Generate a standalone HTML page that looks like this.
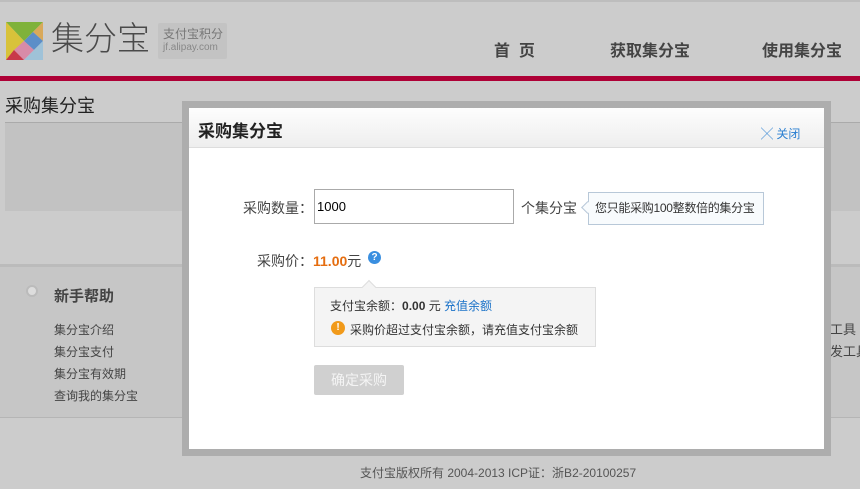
<!DOCTYPE html>
<html><head><meta charset="utf-8"><style>
*{margin:0;padding:0;box-sizing:border-box}
body{width:860px;height:489px;overflow:hidden;background:#cccccc;font-family:"Liberation Sans","Noto Sans CJK SC","WenQuanYi Zen Hei",sans-serif;font-size:12px;color:#333;position:relative}
.a{position:absolute;white-space:nowrap}
</style></head><body>
<div class="a" style="left:0;top:0;width:860px;height:2px;background:#bdbdbd"></div>
<svg class="a" style="left:6px;top:22px" width="37" height="38" viewBox="0 0 37 38">
<polygon points="0,0 37,0 18,19" fill="#7fb23a"/>
<polygon points="0,0 18,19 0,38" fill="#d8c23a"/>
<polygon points="37,0 37,19 27,10" fill="#d9a95a"/>
<polygon points="27,10 37,19 28,28 18,19" fill="#5c8ec8"/>
<polygon points="18,19 28,28 18,38 8,28" fill="#d88ba8"/>
<polygon points="0,38 8,28 18,38" fill="#c8384a"/>
<polygon points="37,19 37,38 18,38" fill="#9fc2d8"/>
</svg>
<div class="a" style="left:51px;top:19px;font-size:33px;line-height:40px;color:#4a4a4a;font-weight:300">集分宝</div>
<div class="a" style="left:158px;top:23px;width:69px;height:36px;background:#c3c3c3;border-radius:2px"></div>
<div class="a" style="left:163px;top:27px;font-size:12px;line-height:15px;color:#777">支付宝积分</div>
<div class="a" style="left:163px;top:42px;font-size:10px;line-height:12px;color:#888">jf.alipay.com</div>
<div class="a" style="left:494px;top:37px;font-size:16px;font-weight:bold;color:#444">首&nbsp;&nbsp;页</div>
<div class="a" style="left:610px;top:37px;font-size:16px;font-weight:bold;color:#444">获取集分宝</div>
<div class="a" style="left:762px;top:37px;font-size:16px;font-weight:bold;color:#444">使用集分宝</div>
<div class="a" style="left:0;top:76px;width:860px;height:5px;background:#ae0036"></div>
<div class="a" style="left:5px;top:92px;font-size:18px;color:#222">采购集分宝</div>
<div class="a" style="left:5px;top:122px;width:855px;height:1px;background:#aaa"></div>
<div class="a" style="left:5px;top:123px;width:855px;height:88px;background:#c2c2c2"></div>
<div class="a" style="left:0;top:264px;width:860px;height:3px;background:#bbb"></div>
<div class="a" style="left:0;top:267px;width:860px;height:150px;background:#c6c6c6"></div>
<div class="a" style="left:0;top:417px;width:860px;height:1px;background:#b5b5b5"></div>
<div class="a" style="left:26px;top:285px;width:12px;height:12px;border-radius:50%;background:#ddd;border:2px solid #bbb"></div>
<div class="a" style="left:54px;top:285px;font-size:15px;font-weight:bold;color:#444">新手帮助</div>
<div class="a" style="left:54px;top:319px;font-size:12px;line-height:22px;color:#444">集分宝介绍<br>集分宝支付<br>集分宝有效期<br>查询我的集分宝</div>
<div class="a" style="left:830px;top:319px;font-size:13px;line-height:22px;color:#444">工具<br>发工具</div>
<div class="a" style="left:360px;top:464px;font-size:12px;color:#555">支付宝版权所有 2004-2013 ICP证：浙B2-20100257</div>
<div class="a" style="left:182px;top:101px;width:649px;height:355px;background:#adadad"></div>
<div class="a" style="left:189px;top:108px;width:635px;height:341px;background:#fff"></div>
<div class="a" style="left:189px;top:108px;width:635px;height:40px;background:linear-gradient(#fdfdfd,#eeeeee);border-bottom:1px solid #ddd"></div>
<div class="a" style="left:198px;top:117px;font-size:17px;font-weight:bold;color:#222">采购集分宝</div>
<div class="a" style="left:761px;top:125px;font-size:12px;color:#2a7fd1">╳ 关闭</div>
<div class="a" style="left:243px;top:198px;font-size:14px;color:#444">采购数量：</div>
<div class="a" style="left:314px;top:189px;width:200px;height:35px;border:1px solid #aaa;font-size:13px;line-height:33px;padding-left:2px;color:#000">1000</div>
<div class="a" style="left:521px;top:198px;font-size:14px;color:#444">个集分宝</div>
<div class="a" style="left:588px;top:192px;width:176px;height:33px;border:1px solid #b8c8d8;background:#f8fbfd;font-size:12px;line-height:31px;padding-left:6px;color:#333;letter-spacing:-0.3px">您只能采购100整数倍的集分宝</div>
<div class="a" style="left:583px;top:203px;width:9px;height:9px;background:#f8fbfd;border-left:1px solid #b8c8d8;border-bottom:1px solid #b8c8d8;transform:rotate(45deg)"></div>
<div class="a" style="left:257px;top:251px;font-size:14px;color:#444">采购价：<b style="color:#e56d0f">11.00</b>元</div>
<div class="a" style="left:368px;top:251px;width:13px;height:13px;border-radius:50%;background:#3a8fe0;color:#fff;font-size:10px;font-weight:bold;line-height:13px;text-align:center">?</div>
<div class="a" style="left:314px;top:287px;width:282px;height:60px;border:1px solid #ddd;background:#f4f4f4"></div>
<div class="a" style="left:364px;top:282px;width:10px;height:10px;background:#f4f4f4;border-left:1px solid #ddd;border-top:1px solid #ddd;transform:rotate(45deg)"></div>
<div class="a" style="left:330px;top:297px;font-size:12px;color:#333">支付宝余额：<b>0.00</b> 元 <span style="color:#1a72c8">充值余额</span></div>
<div class="a" style="left:331px;top:321px;width:14px;height:14px;border-radius:50%;background:#f19a1a;color:#fff;font-size:10px;font-weight:bold;line-height:14px;text-align:center">!</div>
<div class="a" style="left:350px;top:321px;font-size:12px;color:#333">采购价超过支付宝余额，请充值支付宝余额</div>
<div class="a" style="left:314px;top:365px;width:90px;height:30px;background:#d0d0d0;border-radius:2px;color:#f4f4f4;font-size:14px;line-height:30px;text-align:center">确定采购</div>
</body></html>
